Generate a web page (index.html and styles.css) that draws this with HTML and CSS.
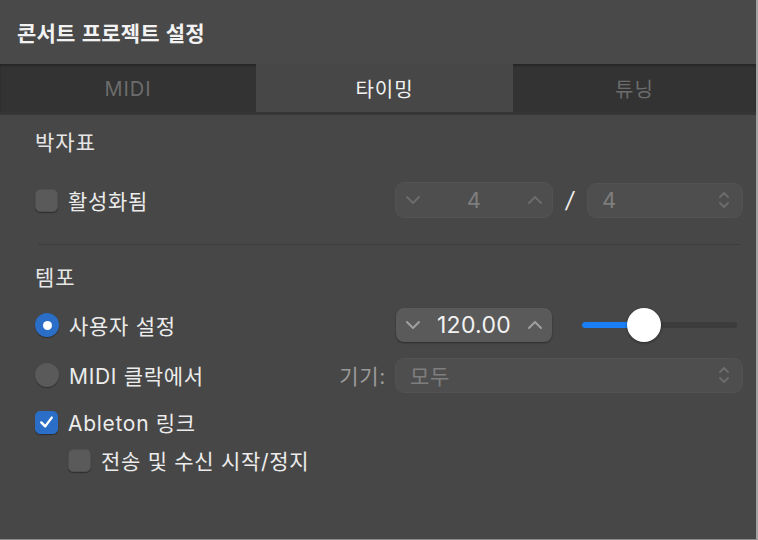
FILE: index.html
```html
<!DOCTYPE html>
<html lang="ko">
<head>
<meta charset="utf-8">
<title>콘서트 프로젝트 설정</title>
<link rel="stylesheet" href="styles.css">
</head>
<body>
<div class="window">
  <header class="titlebar">콘서트 프로젝트 설정</header>
  <nav class="tabs">
    <div class="tab">MIDI</div>
    <div class="tab active">타이밍</div>
    <div class="tab">튜닝</div>
  </nav>
  <main class="content">
    <h2 class="section">박자표</h2>
    <div class="row row-sig">
      <div class="label-area">
        <label class="opt"><span class="check"></span><span>활성화됨</span></label>
      </div>
      <div class="stepper disabled">
        <svg class="chev" viewBox="0 0 16 10"><polyline points="2,2 8,8 14,2"/></svg>
        <span class="val">4</span>
        <svg class="chev" viewBox="0 0 16 10"><polyline points="2,8 8,2 14,8"/></svg>
      </div>
      <span class="slash">/</span>
      <div class="select disabled sel-sig">
        <span class="val">4</span>
        <svg class="updown" viewBox="0 0 12 20"><polyline points="2,7 6,3 10,7"/><polyline points="2,13 6,17 10,13"/></svg>
      </div>
    </div>
    <hr class="sep">
    <h2 class="section tempo">템포</h2>
    <div class="row row-user">
      <div class="label-area">
        <label class="opt"><span class="radio on"></span><span>사용자 설정</span></label>
      </div>
      <div class="stepper">
        <svg class="chev" viewBox="0 0 16 10"><polyline points="2,2 8,8 14,2"/></svg>
        <span class="val">120.00</span>
        <svg class="chev" viewBox="0 0 16 10"><polyline points="2,8 8,2 14,8"/></svg>
      </div>
      <div class="slider">
        <div class="fill" style="width:40%"></div>
        <div class="thumb" style="left:40%"></div>
      </div>
    </div>
    <div class="row row-midi">
      <div class="label-area split">
        <label class="opt"><span class="radio"></span><span>MIDI 클락에서</span></label>
        <span class="device">기기:</span>
      </div>
      <div class="select disabled sel-device">
        <span class="val">모두</span>
        <svg class="updown" viewBox="0 0 12 20"><polyline points="2,7 6,3 10,7"/><polyline points="2,13 6,17 10,13"/></svg>
      </div>
    </div>
    <div class="row row-ableton">
      <label class="opt"><span class="check on"><svg viewBox="0 0 24 24"><polyline points="6,12.5 10.5,17 18,7"/></svg></span><span>Ableton 링크</span></label>
    </div>
    <div class="row row-sub">
      <label class="opt"><span class="check"></span><span>전송 및 수신 시작/정지</span></label>
    </div>
  </main>
</div>
</body>
</html>
```

FILE: styles.css
```css
html, body {
  margin: 0;
  padding: 0;
  background: #474747;
}
body {
  font-family: "Inter", "Noto Sans CJK KR", sans-serif;
  color: #e6e6e6;
}
.window {
  width: 756px;
  height: 539px;
  border-right: 2px solid #a3a3a3;
  border-bottom: 1px solid #8a8a8a;
  background: #474747;
  overflow: hidden;
}
.titlebar {
  height: 64px;
  box-sizing: border-box;
  padding-left: 17px;
  display: flex;
  align-items: center;
  font-family: "Noto Sans CJK KR", sans-serif;
  font-weight: 700;
  font-size: 21px;
  letter-spacing: 0.2px;
  color: #f2f2f2;
  background: #494949;
  padding-bottom: 1px;
}
.tabs {
  display: grid;
  grid-template-columns: 256px 257px 1fr;
  height: 48px;
  background: #333333;
  border-bottom: 3px solid #363636;
  box-shadow: inset 0 2px 2px rgba(0,0,0,0.25);
}
.tab {
  display: flex;
  align-items: center;
  justify-content: center;
  font-size: 20px;
  letter-spacing: 1px;
  color: #6c6c6c;
  padding-top: 1px;
}
.tab.active {
  background: #474747;
  color: #f2f2f2;
}
.content {
  padding: 14px 0 0 35px;
}
.section {
  margin: 0;
  font-size: 21px;
  letter-spacing: 1px;
  font-weight: 400;
  line-height: 28px;
  color: #e6e6e6;
}
.row {
  display: flex;
  align-items: center;
  height: 36px;
  font-size: 21px;
  letter-spacing: 0.7px;
}
.row-sig { margin-top: 25px; }
.sep {
  margin: 26px 16px 0 3px;
  border: 0;
  height: 1px;
  background: #3d3d3d;
}
.section.tempo { margin-top: 19px; }
.row-user { margin-top: 15px; }
.row-midi { margin-top: 14px; }
.row-ableton { margin-top: 11px; }
.row-sub { margin-top: 2px; padding-left: 33px; }

.label-area {
  width: 361px;
  display: flex;
  align-items: center;
}
.label-area.split {
  justify-content: space-between;
  padding-right: 10px;
  box-sizing: border-box;
}
.opt {
  display: flex;
  align-items: center;
  gap: 10px;
  color: #ececec;
}
.device { color: #9a9a9a; }

.check {
  width: 23px;
  height: 23px;
  box-sizing: border-box;
  border-radius: 5px;
  background: #5a5a5a;
  border: 1px solid #4f4f4f;
  box-shadow: 0 1px 1px rgba(0,0,0,0.35);
  display: flex;
  align-items: center;
  justify-content: center;
}
.check.on {
  background: #2a6ec8;
  border-color: #2a6ec8;
}
.check svg {
  width: 22px;
  height: 22px;
  fill: none;
  stroke: #ffffff;
  stroke-width: 2.8;
  stroke-linecap: round;
  stroke-linejoin: round;
}
.radio {
  width: 24px;
  height: 24px;
  box-sizing: border-box;
  border-radius: 50%;
  background: #5a5a5a;
  box-shadow: 0 1px 1px rgba(0,0,0,0.35);
  display: flex;
  align-items: center;
  justify-content: center;
}
.radio.on { background: #2a6ec8; }
.radio.on::after {
  content: "";
  width: 9px;
  height: 9px;
  border-radius: 50%;
  background: #ffffff;
}

.stepper {
  width: 156px;
  height: 34px;
  box-sizing: border-box;
  border-radius: 8px;
  background: #5a5a5a;
  box-shadow: 0 1px 2px rgba(0,0,0,0.4);
  display: flex;
  align-items: center;
  justify-content: space-between;
  padding: 0 9px;
  color: #f2f2f2;
  letter-spacing: 0.3px;
}
.stepper .val { font-size: 23px; }
.stepper.disabled {
  background: #4e4e4e;
  box-shadow: 0 0 0 1px #525252;
  color: #7e7e7e;
}
.stepper.disabled .val { font-size: 22px; }
.chev {
  width: 16px;
  height: 10px;
  fill: none;
  stroke: #a0a0a0;
  stroke-width: 2;
  stroke-linecap: round;
  stroke-linejoin: round;
}
.disabled .chev { stroke: #6c6c6c; }

.slash {
  width: 36px;
  text-align: center;
  font-size: 22px;
  color: #f0f0f0;
  font-style: italic;
}
.select {
  height: 33px;
  box-sizing: border-box;
  border-radius: 8px;
  background: #4e4e4e;
  box-shadow: 0 0 0 1px #525252;
  display: flex;
  align-items: center;
  justify-content: space-between;
  padding: 0 12px 0 14px;
  color: #7e7e7e;
}
.sel-sig { width: 154px; }
.sel-sig .val { font-size: 22px; }
.sel-device { width: 346px; }
.sel-device .val { font-size: 21px; }
.updown {
  width: 12px;
  height: 20px;
  fill: none;
  stroke: #6c6c6c;
  stroke-width: 1.8;
  stroke-linecap: round;
  stroke-linejoin: round;
}

.slider {
  position: relative;
  margin-left: 30px;
  width: 155px;
  height: 6px;
  border-radius: 3px;
  background: #3c3c3c;
}
.slider .fill {
  height: 100%;
  border-radius: 3px;
  background: #1a7ef5;
}
.slider .thumb {
  position: absolute;
  top: 50%;
  width: 34px;
  height: 34px;
  margin: -17px 0 0 -17px;
  border-radius: 50%;
  background: #ffffff;
  box-shadow: 0 1px 3px rgba(0,0,0,0.4);
}
```
